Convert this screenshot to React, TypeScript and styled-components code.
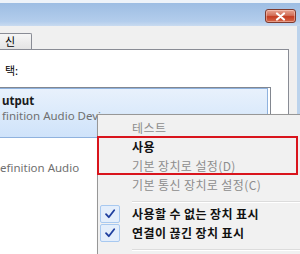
import styled, { createGlobalStyle } from 'styled-components'

const GlobalStyle = createGlobalStyle`
  html, body {
    margin: 0;
    padding: 0;
    background: #ffffff;
  }
  body {
    font-family: "Noto Sans", "Noto Sans CJK KR", sans-serif;
  }
`

const menuItems = [
  { label: '테스트', disabled: true },
  { label: '사용', bold: true },
  { label: '기본 장치로 설정(D)', disabled: true },
  { label: '기본 통신 장치로 설정(C)', disabled: true },
  { separator: true },
  { label: '사용할 수 없는 장치 표시', bold: true, checked: true },
  { label: '연결이 끊긴 장치 표시', bold: true, checked: true },
  { separator: true },
]

function CheckMark() {
  return (
    <svg width="12" height="12" viewBox="0 0 12 12">
      <path d="M2 6.2 L4.8 9.2 L10.2 2.2" fill="none" stroke="#1f3f9f" strokeWidth="1.8" strokeLinecap="round" strokeLinejoin="round" />
    </svg>
  )
}

function App() {
  return (
    <>
      <GlobalStyle />
      <Window>
        <TopEdge />
        <TitleBar>
          <CloseButton>
            <svg width="11" height="9" viewBox="0 0 11 9">
              <path d="M2 1.5 L9 7.5 M9 1.5 L2 7.5" stroke="#ffffff" strokeWidth="2.2" strokeLinecap="round" />
            </svg>
          </CloseButton>
        </TitleBar>
        <Content>
          <Inner>
            <TabStrip>
              <Tab>신</Tab>
            </TabStrip>
            <TabPage>
              <Label>택:</Label>
              <ListBox>
                <SelectedItem>
                  <DeviceName>utput</DeviceName>
                  <DeviceDesc>finition Audio Device</DeviceDesc>
                </SelectedItem>
                <Item>
                  <DeviceDesc>efinition Audio</DeviceDesc>
                </Item>
              </ListBox>
            </TabPage>
          </Inner>
          <Frame />
        </Content>

        <Menu>
          {menuItems.map((m, i) =>
            m.separator ? (
              <Separator key={i} />
            ) : (
              <MenuItem key={i} $disabled={m.disabled} $bold={m.bold}>
                <Gutter>{m.checked && <CheckBox><CheckMark /></CheckBox>}</Gutter>
                {m.label}
              </MenuItem>
            )
          )}
        </Menu>
        <Highlight />
      </Window>
    </>
  )
}

const Window = styled.div`
  position: relative;
  width: 300px;
  height: 254px;
  overflow: hidden;
  display: flex;
  flex-direction: column;
`

const TopEdge = styled.div`
  flex-shrink: 0;
  height: 3px;
  background: #eef3f9;
`

const TitleBar = styled.div`
  flex-shrink: 0;
  height: 23px;
  background: linear-gradient(#9dbde3, #b3cdec 80%, #c9dbf0);
  display: flex;
  justify-content: flex-end;
  align-items: flex-start;
  padding: 6px 4px 0 0;
  box-sizing: border-box;
`

const CloseButton = styled.div`
  width: 31px;
  height: 14px;
  box-sizing: border-box;
  border: 1px solid #7e3a2e;
  border-radius: 3px;
  background: linear-gradient(#e9a593, #d2705a 45%, #c43c22 55%, #d66a4c);
  display: flex;
  align-items: center;
  justify-content: center;
  box-shadow: inset 0 0 0 1px rgba(255, 220, 210, 0.45);
`

const Content = styled.div`
  flex: 1;
  min-height: 0;
  display: flex;
`

const Inner = styled.div`
  flex: 1;
  min-height: 0;
  background: #f0f0f0;
  display: flex;
  flex-direction: column;
  padding-right: 8px;
`

const Frame = styled.div`
  width: 3px;
  background: #bcd3ec;
`

const TabStrip = styled.div`
  flex-shrink: 0;
  height: 23px;
  display: flex;
  align-items: flex-end;
`

const Tab = styled.div`
  width: 32px;
  height: 16px;
  box-sizing: border-box;
  border: 1px solid #898c95;
  border-left: none;
  border-bottom: none;
  border-radius: 0 2px 0 0;
  background: linear-gradient(#f6f6f6, #e4e4e4);
  font-family: "Noto Sans CJK KR", sans-serif;
  font-size: 11px;
  line-height: 15px;
  padding-left: 5px;
  color: #000;
`

const TabPage = styled.div`
  flex: 1;
  min-height: 0;
  display: flex;
  flex-direction: column;
  background: #ffffff;
  border-top: 1px solid #898c95;
  border-right: 1px solid #898c95;
`

const Label = styled.div`
  flex-shrink: 0;
  margin-top: 12px;
  padding-left: 5px;
  font-family: "Noto Sans CJK KR", sans-serif;
  font-size: 11px;
  line-height: 16px;
  color: #000;
`

const ListBox = styled.div`
  flex: 1;
  min-height: 0;
  margin: 9px 17px 0 0;
  border-top: 1px solid #828790;
  border-right: 1px solid #828790;
`

const SelectedItem = styled.div`
  margin-right: 2px;
  height: 50px;
  box-sizing: border-box;
  padding: 4px 0 0 2px;
  background: linear-gradient(#e8f1fc, #cfe3fa);
  border: 1px solid #8fb2de;
  border-left: none;
`

const Item = styled.div`
  padding: 22px 0 0 0;
`

const DeviceName = styled.div`
  font-size: 11.5px;
  line-height: 15px;
  font-weight: 700;
  color: #1a1a1a;
`

const DeviceDesc = styled.div`
  font-size: 11.5px;
  line-height: 15px;
  color: #707070;
`

const Menu = styled.div`
  position: absolute;
  left: 97px;
  top: 114px;
  width: 215px;
  height: 160px;
  box-sizing: border-box;
  background: #f1f1f1;
  border: 1px solid #979797;
  padding-top: 3px;
  box-shadow: 2px 2px 3px rgba(0, 0, 0, 0.2);
`

const MenuItem = styled.div<{ $disabled?: boolean; $bold?: boolean }>`
  height: 19px;
  display: flex;
  align-items: center;
  font-family: "Noto Sans CJK KR", sans-serif;
  font-size: 12px;
  letter-spacing: 0.4px;
  white-space: nowrap;
  color: ${({ $disabled }) => ($disabled ? '#8d8d8d' : '#111111')};
  font-weight: ${({ $bold }) => ($bold ? 700 : 400)};
`

const Gutter = styled.div`
  width: 34px;
  display: flex;
  padding-left: 2px;
  box-sizing: border-box;
`

const CheckBox = styled.div`
  width: 20px;
  height: 18px;
  box-sizing: border-box;
  border: 1px solid #a8c9f0;
  border-radius: 2px;
  background: #e4eefb;
  display: flex;
  align-items: center;
  justify-content: center;
`

const Separator = styled.div`
  margin: 7px 0 1px 34px;
  height: 1px;
  background: #dcdcdc;
  border-bottom: 1px solid #ffffff;
`

const Highlight = styled.div`
  position: absolute;
  left: 97px;
  top: 136px;
  width: 201px;
  height: 39px;
  box-sizing: border-box;
  border: 2px solid #d9141c;
`

export default App
